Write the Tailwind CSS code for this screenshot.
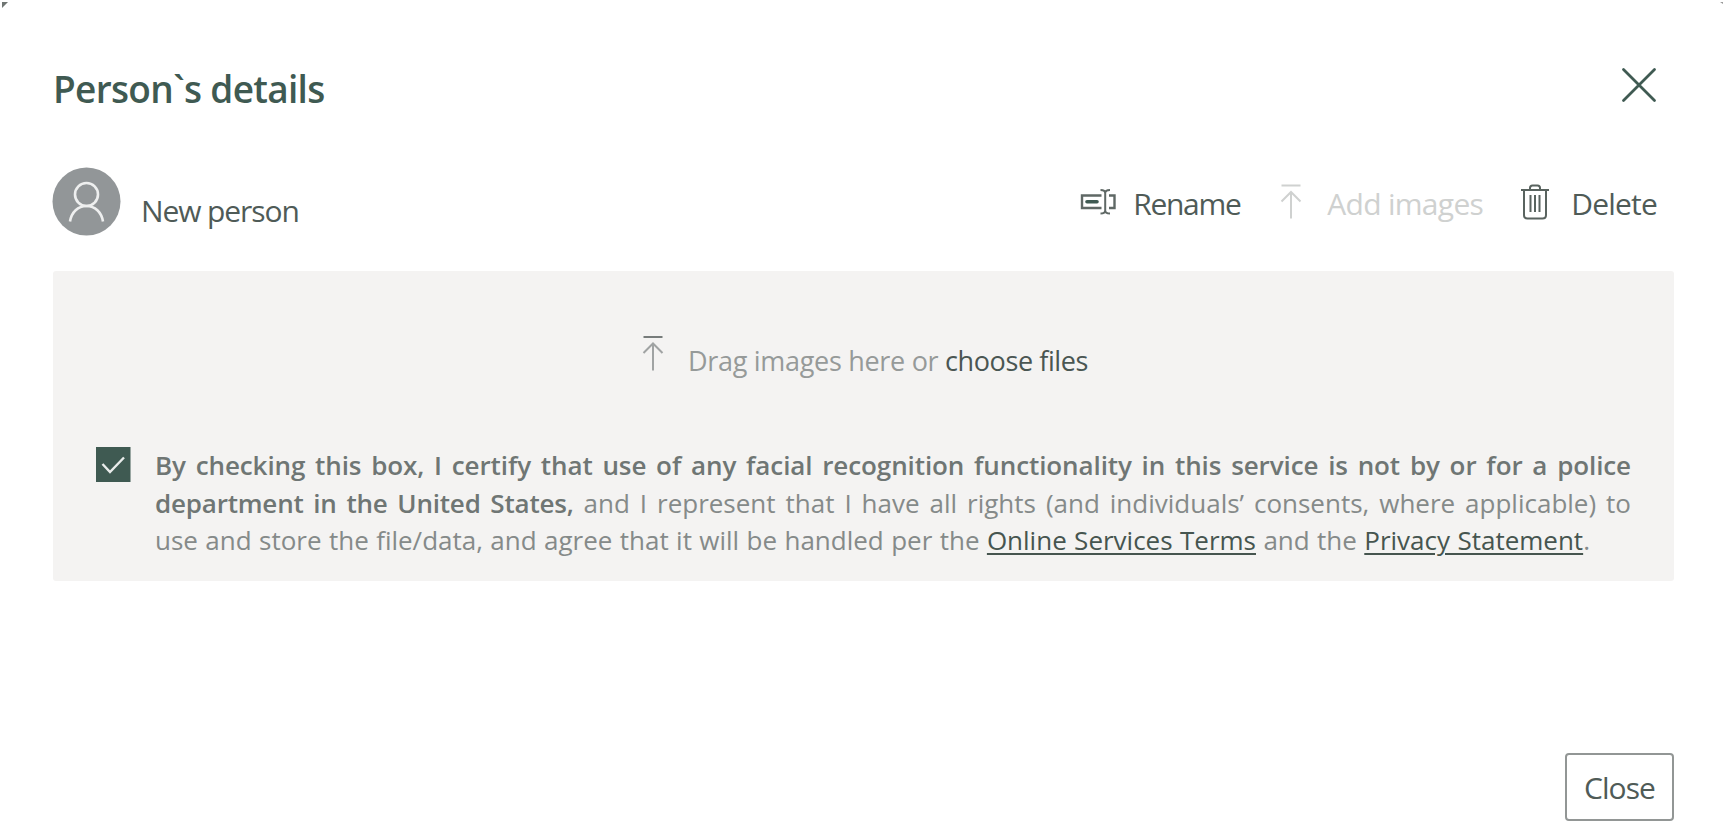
<!DOCTYPE html>
<html lang="en">
<head>
<meta charset="utf-8">
<title>Person`s details</title>
<script src="https://cdn.jsdelivr.net/npm/@tailwindcss/browser@4"></script>
</head>
<body class="bg-white font-['Open_Sans','Noto_Sans',sans-serif] text-[#4f5b57]">
<main class="relative flex h-[825px] w-[1725px] flex-col overflow-hidden pl-[53px] pr-[51px]">
  <svg class="absolute left-0 top-0" width="10" height="10"><path d="M2 2h6L2 8z" fill="#6f7573"/></svg>
  <svg class="absolute right-0 top-0" width="8" height="8"><path d="M3 2h3v2z" fill="#999"/></svg>
  <header class="flex h-[167px] items-start justify-between pr-[17px] pt-[62px]">
    <h1 class="h-[54px] whitespace-nowrap text-[37px] font-semibold leading-[54px] tracking-[-0.7px] text-[#3f5a52]">Person`s details</h1>
    <svg class="mt-[5px]" width="36" height="36" viewBox="0 0 36 36" fill="none" stroke="#3f5a52" stroke-width="2.8" stroke-linecap="round"><path d="M2.500 2.500l31 31M33.500 2.500l-31 31"/></svg>
  </header>
  <section class="flex h-[104px] items-start">
    <svg class="-ml-px" width="69" height="69" viewBox="0 0 69 69" fill="none"><circle cx="34.500" cy="34.500" r="34" fill="#929698"/><g stroke="#eeefef" stroke-width="2.600"><circle cx="34.500" cy="27.500" r="11.500"/><path d="M18 54.500C19.500 45 26 39 34.500 39s15 6 16.500 15.500"/></g></svg>
    <span class="ml-[20px] mt-[22px] whitespace-nowrap text-[30px] leading-[44px] tracking-[-1.1px]">New person</span>
    <div class="ml-auto flex items-start whitespace-nowrap pr-[17px] pt-[15px] text-[30px] leading-[44px] tracking-[-0.7px]">
      <div class="flex w-[200px]">
        <svg class="-ml-px mt-[6px]" width="36" height="28" viewBox="0 0 36 28" fill="none" stroke="#5f6865" stroke-width="2"><path d="M21.500 7.500H2v12.500h19.500M29 7.500h5.500v12.500H29" stroke-width="2.400"/><path d="M7 13.700h10" stroke="#3f5a52" stroke-width="3.600" stroke-linecap="round"/><path d="M20.500 2c3 0 4.700 1 4.700 3v17.500c0 2-1.700 3-4.700 3M30 2c-3 0-4.800 1-4.800 3v17.500c0 2 1.800 3 4.800 3"/></svg>
        <span class="ml-[17px] tracking-[-1.3px]">Rename</span>
      </div>
      <div class="flex w-[240px] text-[#cfd1d0]">
        <svg class="-ml-px mt-[2px]" width="22" height="35" viewBox="0 0 22 35" fill="none" stroke="currentColor" stroke-width="2"><path d="M1.500 1.500h19M11 34.500V8M1.500 17.500L11 8l9.500 9.500"/></svg>
        <span class="ml-[25px]">Add images</span>
      </div>
      <div class="flex">
        <svg class="mt-[2px]" width="28" height="36" viewBox="0 0 28 36" fill="none" stroke="#59635f" stroke-width="2"><path d="M0 6h28M9 5.500V4q0-2.500 2.500-2.500h5Q19 1.500 19 4v1.500M3 6v25q0 3.500 3.500 3.500h15q3.500 0 3.500-3.500V6"/><path d="M9.500 11v17M14 11v17M18.500 11v17"/></svg>
        <span class="ml-[22px] tracking-[-0.8px]">Delete</span>
      </div>
    </div>
  </section>
  <section class="h-[310px] rounded-[3px] bg-[#f4f3f2] pl-[43px] pr-[42px] pt-[64px]">
    <div class="flex h-[112px] items-start pl-[546px] text-[27px] leading-[40px]">
      <svg width="22" height="36" viewBox="0 0 22 36" fill="none" stroke="#a0a3a3" stroke-width="2"><path d="M1.500 2h19" stroke="#777c7b"/><path d="M11 35.500V8.500M1.500 18L11 8.500l9.500 9.500"/></svg>
      <p class="ml-[24px] mt-[6px] whitespace-nowrap tracking-[-0.3px] text-[#969a99]">Drag images here or <a class="text-[#4a5652] tracking-[-0.4px]">choose files</a></p>
    </div>
    <div class="flex items-start">
      <svg width="35" height="36" viewBox="0 0 35 36"><path fill="#3f5a52" d="M0 0h34.500v35H0z"/><path d="M6.500 17l7.500 8L28 10.500" fill="none" stroke="#e9eceb" stroke-width="2.400"/></svg>
      <p class="ml-[24px] whitespace-nowrap text-[26px] leading-[37.5px] text-[#858a89]">
        <span class="block w-[1476px] font-semibold tracking-[-0.1px] text-[#6f7674] [text-align-last:justify]">By checking this box, I certify that use of any facial recognition functionality in this service is not by or for a police</span>
        <span class="block w-[1476px] [text-align-last:justify]"><b class="font-semibold tracking-[-0.2px] text-[#6f7674]">department in the United States,</b> and I represent that I have all rights (and individuals’ consents, where applicable) to</span>
        <span class="block w-[1435px] [text-align-last:justify]">use and store the file/data, and agree that it will be handled per the <a class="text-[#46554f] underline decoration-2 underline-offset-[3px]">Online Services Terms</a> and the <a class="text-[#46554f] underline decoration-2 underline-offset-[3px]">Privacy Statement</a>.</span>
      </p>
    </div>
  </section>
  <footer class="flex flex-1 justify-end pt-[172px]">
    <button class="h-[68px] w-[109px] rounded-[4px] border-2 border-[#929695] pt-[2px] text-[30px] leading-[44px] tracking-[-0.9px]">Close</button>
  </footer>
</main>
</body>
</html>
